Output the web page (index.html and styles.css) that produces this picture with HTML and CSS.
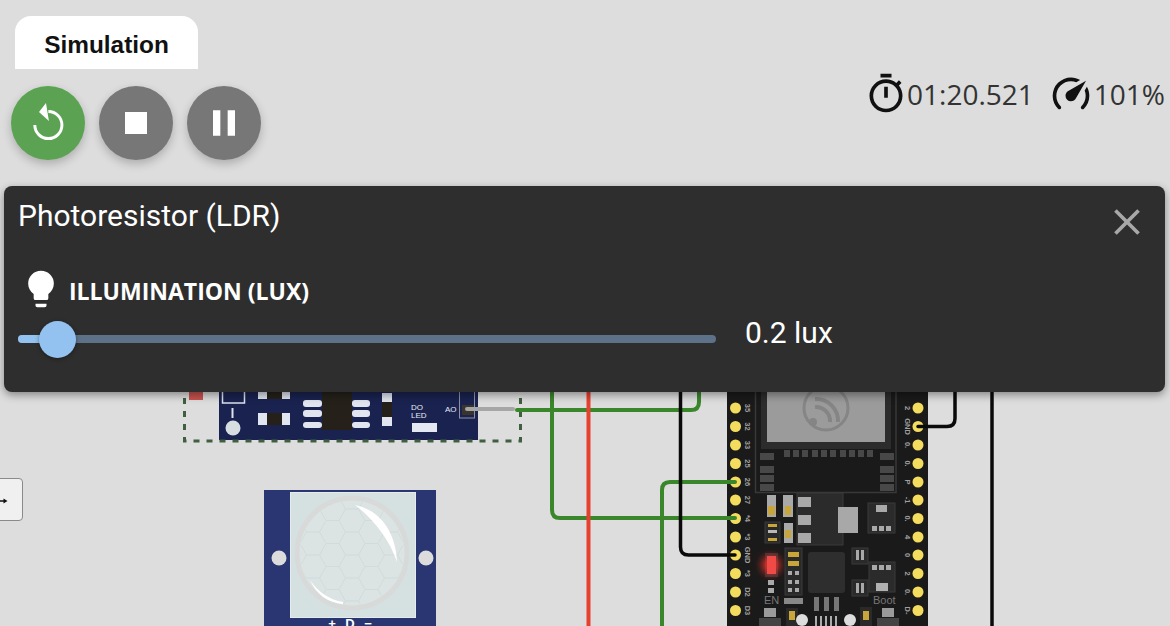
FILE: index.html
```html
<!DOCTYPE html>
<html lang="en">
<head>
<meta charset="utf-8">
<title>Simulation</title>
<link rel="stylesheet" href="styles.css">
</head>
<body>
<svg class="canvas" width="1170" height="626" viewBox="0 0 1170 626" xmlns="http://www.w3.org/2000/svg">
  <defs>
    <pattern id="hex" width="39" height="23" patternUnits="userSpaceOnUse" x="339" y="509">
      <path d="M0 11.500L6.500 0H19.500L26 11.500L19.500 23H6.500ZM26 11.500H39" fill="none" stroke="#d1dbdb" stroke-width="1"/>
    </pattern>
    <filter id="glow" x="-150%" y="-100%" width="400%" height="300%"><feGaussianBlur stdDeviation="4"/></filter>
  </defs>

  <!-- LDR module -->
  <rect class="red-part" x="189" y="388" width="14" height="12"/>
  <rect class="navy" x="219" y="380" width="259" height="60"/>
  <rect class="sel" x="184.500" y="370" width="336" height="71"/>
  <circle class="hole" cx="233" cy="428" r="7.500"/>
  <path d="M232.500 408v10" stroke="#dde3ee" stroke-width="2"/>
  <path d="M222.500 385v18h22v-18" fill="none" stroke="#dde3ee" stroke-width="1.500"/>
  <rect class="pad" x="258" y="390" width="32" height="9"/>
  <rect class="chip" x="267" y="390" width="15" height="9"/>
  <rect class="pad" x="258" y="413" width="32" height="12"/>
  <rect class="chip" x="267" y="413" width="15" height="12"/>
  <rect class="chip" x="322" y="392" width="30" height="38"/>
  <rect class="pad" x="303" y="400" width="19" height="7" rx="3"/>
  <rect class="pad" x="303" y="410" width="19" height="7" rx="3"/>
  <rect class="pad" x="303" y="422" width="19" height="6" rx="3"/>
  <rect class="pad" x="352" y="400" width="18" height="7" rx="3"/>
  <rect class="pad" x="352" y="410" width="18" height="7" rx="3"/>
  <rect class="pad" x="352" y="422" width="18" height="6" rx="3"/>
  <rect class="pad" x="382" y="393" width="10" height="33"/>
  <rect class="chip" x="382" y="402" width="10" height="15"/>
  <text class="tiny" x="411" y="410">DO</text>
  <text class="tiny" x="411" y="418">LED</text>
  <rect x="412" y="423" width="25" height="9" fill="#e3e8f2"/>
  <text class="tiny" x="445" y="412">AO</text>
  <rect x="459.500" y="385" width="15" height="33" fill="none" stroke="#8d92a5" stroke-width="1"/>
  <rect x="462" y="405" width="12" height="10" fill="#3a352c"/>

  <!-- ESP32 board -->
  <rect x="727" y="385" width="201" height="241" fill="#1a1a1a"/>
  <path d="M755.500 385V492.500H896V385" fill="none" stroke="#383838" stroke-width="1.500"/>
  <rect x="761" y="385" width="130" height="64" fill="#2c2c2c"/>
  <rect x="767" y="385" width="118" height="57" fill="#9b9b9b"/>
  <g fill="none" stroke="#858585">
    <circle cx="826" cy="408" r="22" stroke-width="3"/>
    <path d="M815 399a22 22 0 0 1 23 23M815 407a14 14 0 0 1 15 15" stroke-width="4"/>
  </g>
  <circle cx="813" cy="422" r="4" fill="#858585"/>
  <g fill="#484848">
    <rect x="760" y="453" width="14" height="7"/><rect x="760" y="466" width="14" height="7"/>
    <rect x="760" y="475" width="14" height="7"/><rect x="760" y="484" width="14" height="7"/>
    <rect x="880" y="453" width="14" height="7"/><rect x="880" y="466" width="14" height="7"/>
    <rect x="880" y="475" width="14" height="7"/><rect x="880" y="484" width="14" height="7"/>
    <rect x="784" y="450" width="6" height="7"/><rect x="793" y="450" width="6" height="7"/>
    <rect x="802" y="450" width="6" height="7"/><rect x="812" y="450" width="6" height="7"/>
    <rect x="821" y="450" width="6" height="7"/><rect x="830" y="450" width="6" height="7"/>
    <rect x="840" y="450" width="6" height="7"/><rect x="849" y="450" width="6" height="7"/>
    <rect x="858" y="450" width="6" height="7"/><rect x="867" y="450" width="6" height="7"/>
  </g>

  <!-- Small board parts -->
  <g>
    <rect class="part" x="767" y="495" width="9" height="22"/><rect x="768" y="506" width="7" height="9" fill="#c9a63a"/>
    <rect class="part" x="783" y="495" width="10" height="22"/><rect x="785" y="506" width="6" height="9" fill="#c9a63a"/>
    <rect x="797" y="493" width="46" height="52" fill="#2b2b2b" stroke="#3a3a3a"/>
    <rect class="part" x="798" y="497" width="13" height="10"/><rect class="part" x="798" y="515" width="13" height="10"/><rect class="part" x="798" y="533" width="13" height="10"/>
    <rect x="838" y="507" width="20" height="26" fill="#a8a8a8"/>
    <rect x="868" y="503" width="27" height="30" fill="#2b2b2b" stroke="#3a3a3a"/><rect class="part" x="876" y="505" width="11" height="7"/>
    <rect class="part" x="872" y="526" width="5" height="5"/><rect class="part" x="879" y="526" width="5" height="5"/><rect class="part" x="886" y="526" width="5" height="5"/>
    <rect x="765" y="522" width="15" height="21" fill="#2a2a2a" stroke="#3a3a3a"/>
    <rect x="768" y="524" width="9" height="3" fill="#c9a63a"/><rect x="768" y="530" width="9" height="3" fill="#b9b9b9"/><rect x="768" y="538" width="9" height="3" fill="#c9a63a"/>
    <rect class="part" x="784" y="523" width="9" height="20"/><rect x="785" y="530" width="6" height="8" fill="#c9a63a"/>
  </g>
  <rect x="765" y="553" width="13" height="24" fill="#333"/>
  <circle cx="771" cy="565" r="9" fill="#f0302c" filter="url(#glow)"/>
  <rect x="767" y="556" width="9" height="18" fill="#ef4a45"/>
  <rect class="part" x="768" y="580" width="6" height="5"/><rect class="part" x="768" y="588" width="6" height="5"/>
  <text class="board-text" x="764" y="604">EN</text>
  <text class="board-text" x="873" y="604">Boot</text>
  <g>
    <rect x="785" y="548" width="17" height="47" fill="#2a2a2a" stroke="#3a3a3a"/>
    <rect x="788" y="552" width="11" height="5" fill="#c9a63a"/><rect x="788" y="561" width="11" height="5" fill="#c9a63a"/>
    <rect class="part" x="788" y="571" width="4" height="4"/><rect class="part" x="795" y="571" width="4" height="4"/>
    <rect class="part" x="788" y="580" width="4" height="4"/><rect class="part" x="795" y="580" width="4" height="4"/>
    <rect class="part" x="788" y="588" width="4" height="4"/><rect class="part" x="795" y="588" width="4" height="4"/>
  </g>
  <rect x="808" y="552" width="37" height="41" rx="3" fill="#2e2e2e"/>
  <rect x="852" y="548" width="16" height="16" fill="#2a2a2a" stroke="#3a3a3a"/><rect class="part" x="856" y="550" width="3" height="10"/><rect class="part" x="861" y="550" width="3" height="10"/>
  <rect x="852" y="580" width="16" height="16" fill="#2a2a2a" stroke="#3a3a3a"/><rect class="part" x="856" y="583" width="3" height="10"/><rect class="part" x="861" y="583" width="3" height="10"/>
  <rect x="869" y="562" width="26" height="30" fill="#2b2b2b" stroke="#3a3a3a"/>
  <rect class="part" x="872" y="565" width="5" height="5"/><rect class="part" x="879" y="565" width="5" height="5"/><rect class="part" x="886" y="565" width="5" height="5"/>
  <rect x="876" y="583" width="12" height="8" fill="#b0b0b0"/>
  <rect x="784" y="598" width="19" height="6" fill="#888"/>
  <rect x="786" y="608" width="12" height="18" fill="#2a2a2a"/><rect x="789" y="611" width="6" height="9" fill="#c9a63a"/>
  <rect x="860" y="607" width="12" height="19" fill="#2a2a2a"/><rect x="863" y="611" width="6" height="9" fill="#c9a63a"/>
  <rect x="814" y="597" width="5" height="14" fill="#777"/><rect x="824" y="597" width="5" height="14" fill="#777"/><rect x="834" y="597" width="5" height="14" fill="#777"/>
  <circle cx="802" cy="620" r="6" fill="#ddd"/><circle cx="850" cy="620" r="6" fill="#ddd"/>
  <path d="M816 616v10M821 616v10M826 616v10M831 616v10M836 616v10" stroke="#ddd" stroke-width="1.500"/>
  <rect x="764" y="608" width="12" height="9" fill="#9a9a9a"/><rect x="759" y="618" width="22" height="8" fill="#444"/>
  <rect x="882" y="608" width="12" height="9" fill="#9a9a9a"/><rect x="877" y="618" width="22" height="8" fill="#444"/>

  <!-- Board pins -->
  <g class="pins">
    <circle cx="735.500" cy="408" r="5.500"/><circle cx="735.500" cy="426.500" r="5.500"/><circle cx="735.500" cy="445" r="5.500"/>
    <circle cx="735.500" cy="463.500" r="5.500"/><circle cx="735.500" cy="482" r="5.500"/><circle cx="735.500" cy="500" r="5.500"/>
    <circle cx="735.500" cy="518.500" r="5.500"/><circle cx="735.500" cy="537" r="5.500"/><circle cx="735.500" cy="555" r="5.500"/>
    <circle cx="735.500" cy="573.500" r="5.500"/><circle cx="735.500" cy="592" r="5.500"/><circle cx="735.500" cy="610.500" r="5.500"/>
    <circle cx="918" cy="408" r="5.500"/><circle cx="918" cy="426.500" r="5.500"/><circle cx="918" cy="445" r="5.500"/>
    <circle cx="918" cy="463.500" r="5.500"/><circle cx="918" cy="482" r="5.500"/><circle cx="918" cy="500" r="5.500"/>
    <circle cx="918" cy="518.500" r="5.500"/><circle cx="918" cy="537" r="5.500"/><circle cx="918" cy="555" r="5.500"/>
    <circle cx="918" cy="573.500" r="5.500"/><circle cx="918" cy="592" r="5.500"/><circle cx="918" cy="610.500" r="5.500"/>
  </g>

  <!-- Wires -->
  <path class="wire green" d="M517 410H691q8 0 8-8V385"/>
  <path class="wire grey" d="M467 409H513"/>
  <path class="wire green" d="M552 385V510q0 8 8 8H735"/>
  <path class="wire red" d="M588.500 385V626"/>
  <path class="wire green" d="M662 626V490q0-8 8-8H735"/>
  <path class="wire black" d="M680.500 385V547q0 8 8 8H735"/>
  <path class="wire black" d="M992 385V626"/>
  <path class="wire black" d="M918 426.500H947q8 0 8-8V385"/>

  <!-- Pin labels -->
  <g class="pin-label">
    <text transform="translate(745 408) rotate(90)">35</text>
    <text transform="translate(745 426.500) rotate(90)">32</text>
    <text transform="translate(745 445) rotate(90)">33</text>
    <text transform="translate(745 463.500) rotate(90)">25</text>
    <text transform="translate(745 482) rotate(90)">26</text>
    <text transform="translate(745 500) rotate(90)">27</text>
    <text transform="translate(745 518.500) rotate(90)">*4</text>
    <text transform="translate(745 537) rotate(90)">*3</text>
    <text transform="translate(745 555) rotate(90)">GND</text>
    <text transform="translate(745 573.500) rotate(90)">*3</text>
    <text transform="translate(745 592) rotate(90)">D2</text>
    <text transform="translate(745 610.500) rotate(90)">D3</text>
    <text transform="translate(905 408) rotate(90)">2</text>
    <text transform="translate(905 426.500) rotate(90)">GND</text>
    <text transform="translate(905 445) rotate(90)">0.</text>
    <text transform="translate(905 463.500) rotate(90)">0.</text>
    <text transform="translate(905 482) rotate(90)">P</text>
    <text transform="translate(905 500) rotate(90)">-1</text>
    <text transform="translate(905 518.500) rotate(90)">0.</text>
    <text transform="translate(905 537) rotate(90)">4</text>
    <text transform="translate(905 555) rotate(90)">0</text>
    <text transform="translate(905 573.500) rotate(90)">2</text>
    <text transform="translate(905 592) rotate(90)">0.</text>
    <text transform="translate(905 610.500) rotate(90)">D-</text>
  </g>

  <!-- PIR sensor -->
  <rect x="264" y="490" width="172" height="136" fill="#293671"/>
  <circle cx="279" cy="558" r="7.500" fill="#dcdcdc"/>
  <circle cx="426" cy="558" r="7.500" fill="#dcdcdc"/>
  <rect x="290.500" y="492.500" width="125" height="125" fill="#d5e1e1" stroke="#e6ebeb" stroke-width="1"/>
  <circle cx="352" cy="553" r="55" fill="#dbe3e3" stroke="#d8dada" stroke-width="5"/>
  <circle cx="352" cy="553" r="52" fill="url(#hex)"/>
  <path d="M355 505C380 510 396 532 397 562C390 541 375 520 355 505z" fill="#fff"/>
  <path d="M310 580C318 592 330 600 343 602L343 604C328 603 316 594 310 580z" fill="#fff"/>
  <text class="pir-label" x="332" y="628">+</text>
  <text class="pir-label" x="350" y="628">D</text>
  <text class="pir-label" x="368" y="628">−</text>
</svg>

<button class="side-btn" type="button" aria-label="Move">
  <svg class="side-arrow" width="8" height="6" viewBox="0 0 8 6"><path d="M0 2.200H3.500V0.500L7.500 3L3.500 5.500V3.800H0Z"/></svg>
</button>

<main class="app">
  <div class="tab">Simulation</div>
  <div class="toolbar">
    <div class="controls">
      <button class="fab fab-green" type="button" aria-label="Restart">
        <svg class="icon" viewBox="0 0 24 24"><path d="M10.900 1.100L7.100 6L12.500 10.900Z"/><path class="ring" d="M12.200 5.700A7.400 7.400 0 1 1 4.800 13.100"/></svg>
      </button>
      <button class="fab" type="button" aria-label="Stop">
        <svg class="icon" viewBox="0 0 24 24"><path d="M6 6h12v12H6z"/></svg>
      </button>
      <button class="fab" type="button" aria-label="Pause">
        <svg class="icon" viewBox="0 0 24 24"><path d="M6 19h4V5H6v14zm8-14v14h4V5h-4z"/></svg>
      </button>
    </div>
    <div class="status">
      <svg class="icon dark" viewBox="0 0 24 24"><path d="M12,20A7,7 0 0,1 5,13A7,7 0 0,1 12,6A7,7 0 0,1 19,13A7,7 0 0,1 12,20M19.030,7.390L20.450,5.970C20,5.460 19.550,5 19.040,4.560L17.620,6C16.070,4.740 14.120,4 12,4A9,9 0 0,0 3,13A9,9 0 0,0 12,22C17,22 21,17.970 21,13C21,10.880 20.260,8.930 19.030,7.390M11,14H13V8H11M15,1H9V3H15V1Z"/></svg>
      <span class="status-time">01:20.521</span>
      <svg class="icon dark" viewBox="0 0 24 24"><path d="M12,16A3,3 0 0,1 9,13C9,11.880 9.610,10.900 10.500,10.390L20.210,4.770L14.680,14.350C14.180,15.330 13.170,16 12,16M12,3C13.810,3 15.500,3.500 16.970,4.320L14.870,5.530C14,5.190 13,5 12,5A8,8 0 0,0 4,13C4,15.210 4.890,17.210 6.340,18.650H6.350C6.740,19.040 6.740,19.670 6.350,20.060C5.960,20.450 5.320,20.450 4.930,20.070V20.070C3.120,18.260 2,15.760 2,13A10,10 0 0,1 12,3M22,13C22,15.760 20.880,18.260 19.070,20.070V20.070C18.680,20.450 18.050,20.450 17.660,20.060C17.270,19.670 17.270,19.040 17.660,18.650V18.650C19.110,17.200 20,15.210 20,13C20,12 19.810,11 19.460,10.100L20.670,8C21.500,9.500 22,11.180 22,13Z"/></svg>
      <span class="status-speed">101%</span>
    </div>
  </div>

  <section class="panel">
    <header class="panel-head">
      <h2 class="panel-title">Photoresistor (LDR)</h2>
      <svg class="icon close" viewBox="0 0 24 24"><path d="M19 6.410L17.590 5 12 10.590 6.410 5 5 6.410 10.590 12 5 17.590 6.410 19 12 13.410 17.590 19 19 17.590 13.410 12z"/></svg>
    </header>
    <div class="sensor-label">
      <svg class="icon bulb" viewBox="0 0 24 24"><path d="M12,2A7,7 0 0,0 5,9C5,11.380 6.190,13.470 8,14.740V17A1,1 0 0,0 9,18H15A1,1 0 0,0 16,17V14.740C17.810,13.470 19,11.380 19,9A7,7 0 0,0 12,2M9,21A1,1 0 0,0 10,22H14A1,1 0 0,0 15,21V20H9V21Z"/></svg>
      <span>ILLUMINATION (LUX)</span>
    </div>
    <div class="slider-row">
      <div class="slider">
        <div class="slider-fill"></div>
        <div class="slider-thumb"></div>
      </div>
      <span class="slider-value">0.2 lux</span>
    </div>
  </section>
</main>
</body>
</html>
```

FILE: styles.css
```css
* { box-sizing: border-box; }

html, body {
  margin: 0;
  width: 1170px;
  height: 626px;
  overflow: hidden;
}

body {
  background: #dddddd;
  font-family: "Liberation Sans", Arial, sans-serif;
  position: relative;
}

.canvas {
  position: absolute;
  left: 0;
  top: 0;
  display: block;
}

.navy { fill: #1a2350; }
.red-part { fill: #c9534f; }
.sel { fill: none; stroke: #3f5f3f; stroke-width: 3; stroke-dasharray: 6 7; }
.hole { fill: #d8dde2; }
.pad { fill: #e0e5ef; }
.chip { fill: #25211a; }
.tiny { font: 8px "Liberation Sans", sans-serif; fill: #e6e9f2; }
.wire { fill: none; stroke-width: 4; stroke-linecap: round; }
.green { stroke: #3a862b; }
.red { stroke: #e8402f; stroke-linecap: butt; }
.grey { stroke: #a6a6a6; }
.black { stroke: #0a0a0a; stroke-width: 3.500; }
.part { fill: #a9a9a9; }
.pins circle { fill: #f4dd5e; }
.pin-label text { font: bold 7.500px "Liberation Sans", sans-serif; fill: #a0a0a0; text-anchor: middle; }
.board-text { font: 11px "Liberation Sans", sans-serif; fill: #777777; }
.pir-label { font: bold 13px "Liberation Sans", sans-serif; fill: #ffffff; text-anchor: middle; }

.side-btn {
  position: absolute;
  left: -10px;
  top: 478px;
  width: 33px;
  height: 43px;
  padding: 0;
  background: #f0f0f0;
  border: 1px solid #8a8a8a;
  border-radius: 4px;
}

.side-arrow {
  position: absolute;
  left: 9px;
  top: 19px;
  fill: #111111;
}

.app {
  position: relative;
  display: flex;
  flex-direction: column;
  align-items: stretch;
  padding: 16px 5px 0 4px;
  height: 100%;
}

.tab {
  width: 183px;
  height: 53px;
  margin-left: 11px;
  padding-top: 15px;
  background: #ffffff;
  border-radius: 16px 16px 0 0;
  color: #111111;
  font-size: 24.400px;
  font-weight: 700;
  line-height: 28px;
  text-align: center;
}

.toolbar {
  display: flex;
  justify-content: space-between;
  align-items: flex-start;
  height: 74px;
  margin-top: 17px;
  padding-left: 7px;
}

.controls {
  display: flex;
  gap: 14px;
}

.fab {
  width: 74px;
  height: 74px;
  padding: 0;
  border: 0;
  border-radius: 50%;
  background: #777777;
  display: flex;
  align-items: center;
  justify-content: center;
  box-shadow: 0 4px 10px rgba(0, 0, 0, .22);
}

.fab-green { background: #5ba352; }

.icon {
  display: block;
  width: 44px;
  height: 44px;
  fill: #ffffff;
  flex: none;
}

.ring {
  fill: none;
  stroke: #ffffff;
  stroke-width: 1.600;
}

.icon.dark { fill: #111111; }

.status {
  display: flex;
  align-items: center;
  height: 44px;
  margin-top: -14px;
  color: #333333;
  font-family: "Open Sans", sans-serif;
  font-size: 28px;
}

.status-time { margin: 0 15px 0 -1px; }
.status-speed { margin-left: 1px; }

.panel {
  height: 206px;
  margin-top: 26px;
  padding: 12px 0 0 15px;
  background: #2e2e2e;
  border-radius: 8px;
  box-shadow: 0 3px 8px rgba(0, 0, 0, .4);
  color: #ffffff;
  font-family: Roboto, sans-serif;
}

.panel-head {
  display: flex;
  justify-content: space-between;
  align-items: flex-start;
  padding-right: 16px;
}

.panel-title {
  margin: 0 0 0 -1px;
  font-size: 30px;
  font-weight: 400;
  line-height: 36px;
}

.close {
  fill: #a8a8a8;
  margin-top: 2px;
}

.sensor-label {
  display: flex;
  align-items: center;
  gap: 6px;
  margin-top: 25px;
  font-family: "Open Sans", sans-serif;
  font-size: 23px;
  font-weight: 700;
  line-height: 44px;
}

.bulb {
  margin-top: -4px;
}

.slider-row {
  display: flex;
  align-items: flex-start;
  gap: 29px;
  margin-top: 2px;
  margin-left: -1px;
}

.slider {
  position: relative;
  width: 698px;
  height: 8px;
  margin-top: 20px;
  border-radius: 4px;
  background: #5d7289;
}

.slider-fill {
  width: 40px;
  height: 8px;
  border-radius: 4px 0 0 4px;
  background: #93c2f0;
}

.slider-thumb {
  position: absolute;
  left: 21px;
  top: -14.500px;
  width: 37px;
  height: 37px;
  border-radius: 50%;
  background: #93c2f0;
  box-shadow: 0 1px 4px rgba(0, 0, 0, .4);
}

.slider-value {
  font-size: 30px;
  line-height: 36px;
}
```
